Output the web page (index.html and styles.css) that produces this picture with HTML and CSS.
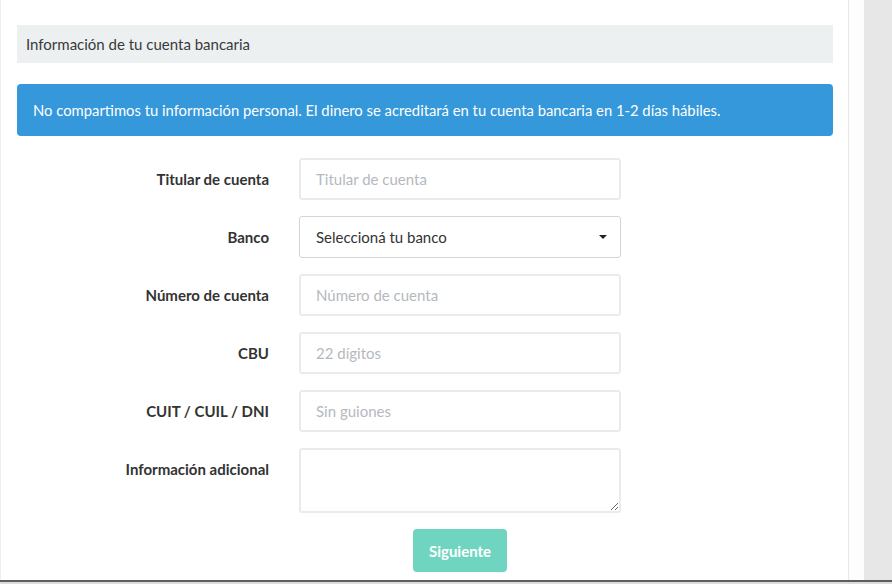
FILE: index.html
```html
<!DOCTYPE html>
<html lang="es">
  <head>
    <meta charset="UTF-8" />
    <meta name="viewport" content="width=device-width, initial-scale=1.0" />
    <title>Cuenta bancaria</title>
    <link rel="stylesheet" href="styles.css">
  </head>
  <body>
    <div class="screen">
      <div class="content">
        <div class="panel">
          <div class="well">Información de tu cuenta bancaria</div>

          <div class="alert">
            No compartimos tu información personal. El dinero se acreditará en tu cuenta bancaria en 1-2 días hábiles.
          </div>

          <form class="bank-form">
            <label for="titular">Titular de cuenta</label>
            <input type="text" id="titular" class="field" placeholder="Titular de cuenta" />

            <label for="banco">Banco</label>
            <div class="select-wrap">
              <select id="banco" class="field select">
                <option>Seleccioná tu banco</option>
              </select>
            </div>

            <label for="numero">Número de cuenta</label>
            <input type="text" id="numero" class="field" placeholder="Número de cuenta" />

            <label for="cbu">CBU</label>
            <input type="text" id="cbu" class="field" placeholder="22 dígitos" />

            <label for="cuit">CUIT / CUIL / DNI</label>
            <input type="text" id="cuit" class="field" placeholder="Sin guiones" />

            <label for="info">Información adicional</label>
            <textarea id="info" class="field area"></textarea>

            <div class="actions">
              <button type="submit" class="btn" disabled>Siguiente</button>
            </div>
          </form>
        </div>
        <div class="gutter"></div>
      </div>
      <div class="side"></div>
    </div>
    <div class="hbar"></div>
  </body>
</html>
```

FILE: styles.css
```css
html,
body {
  margin: 0;
  height: 584px;
  overflow: hidden;
}

body {
  font-family: Lato, "Open Sans", sans-serif;
  font-size: 15px;
  color: #333;
  background: #fff;
}

.screen {
  display: flex;
  height: 580px;
}

.content {
  display: flex;
  width: 864px;
  background: #fff;
}

.panel {
  width: 816px;
  padding: 25px 15px 0 16px;
  border-left: 1px solid #eceeef;
  border-right: 1px solid #e6e8ea;
}

.gutter {
  flex: 1;
  background: #fdfdfd;
}

.side {
  flex: 1;
  background: #e7e7e7;
}

.hbar {
  height: 2px;
  border-top: 2px solid #5c5e60;
  background: #dcdcdc;
}

.well {
  height: 38px;
  line-height: 38px;
  padding: 0 9px;
  background: #ecf0f1;
  color: #3a3a3a;
}

.alert {
  margin-top: 21px;
  padding: 15px 16px;
  line-height: 22px;
  font-size: 14.8px;
  color: #fff;
  background: #3498db;
  border-radius: 4px;
}

.bank-form {
  display: grid;
  grid-template-columns: 252px 322px;
  column-gap: 30px;
  row-gap: 16px;
  margin-top: 22px;
}

.bank-form label {
  text-align: right;
  font-weight: bold;
  line-height: 42px;
  color: #333;
}

.field {
  box-sizing: border-box;
  width: 322px;
  height: 42px;
  padding: 0 15px;
  border: 2px solid #e9ecee;
  border-radius: 3px;
  font-family: inherit;
  font-size: 15px;
  color: #333;
  background: #fff;
  outline: none;
}

.field::placeholder {
  color: #b4b9be;
}

.select-wrap {
  position: relative;
}

.select {
  appearance: none;
  -webkit-appearance: none;
  border: 1px solid #d2d4d6;
  padding-left: 16px;
}

.select-wrap::after {
  content: "";
  position: absolute;
  right: 14px;
  top: 19px;
  border-left: 4px solid transparent;
  border-right: 4px solid transparent;
  border-top: 4px solid #222;
}

.area {
  height: 65px;
  padding: 8px 15px;
  resize: vertical;
}

.actions {
  grid-column: 2;
  display: flex;
  justify-content: center;
}

.btn {
  width: 94px;
  height: 43px;
  border: none;
  border-radius: 4px;
  background: #18bc9c;
  opacity: 0.62;
  color: #fff;
  font-family: inherit;
  font-weight: bold;
  font-size: 15px;
}
```
